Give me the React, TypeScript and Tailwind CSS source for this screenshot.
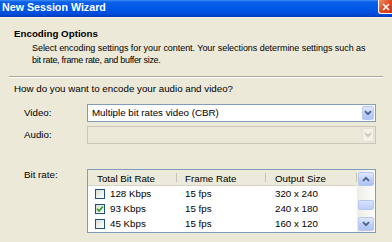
import React from "react";

function Chevron({ color }: { color: string }) {
  return (
    <svg width="8" height="6" viewBox="0 0 8 6">
      <path d="M1 1.2 L4 4.2 L7 1.2" fill="none" stroke={color} strokeWidth="1.8" />
    </svg>
  );
}

function ChevronUp({ color }: { color: string }) {
  return (
    <svg width="8" height="6" viewBox="0 0 8 6">
      <path d="M1 4.8 L4 1.8 L7 4.8" fill="none" stroke={color} strokeWidth="1.8" />
    </svg>
  );
}

function CheckBox({ checked }: { checked?: boolean }) {
  return (
    <div className="w-[10px] h-[10px] border border-[#1c5180] bg-[linear-gradient(135deg,#dcdcd5,#ffffff)] flex items-center justify-center">
      {checked && (
        <svg width="8" height="8" viewBox="0 0 8 8">
          <path d="M1 3.8 L3 6 L7 1.5" fill="none" stroke="#21a121" strokeWidth="1.6" />
        </svg>
      )}
    </div>
  );
}

const rows = [
  { rate: "128 Kbps", fps: "15 fps", size: "320 x 240", checked: false },
  { rate: "93 Kbps", fps: "15 fps", size: "240 x 180", checked: true },
  { rate: "45 Kbps", fps: "15 fps", size: "160 x 120", checked: false },
];

export default function App() {
  return (
    <div
      className="w-[392px] h-[242px] overflow-hidden bg-[#ece9d8] text-black text-[9.75px] leading-[12px]"
      style={{ fontFamily: '"Liberation Sans", Arial, sans-serif' }}
    >
      {/* Title bar */}
      <div className="h-[17px] flex justify-between items-start bg-[linear-gradient(to_bottom,#3d8ef7_0%,#0a5fe8_12%,#0056e6_55%,#004ad8_85%,#0039ad_100%)]">
        <div className="pl-[2px] text-white font-bold text-[10.7px] leading-[14px] whitespace-nowrap">New Session Wizard</div>
        <div className="w-[14px] h-[14px] rounded-bl-[3px] border-l border-b border-white bg-[linear-gradient(135deg,#f0906a,#e04a22_50%,#c9361a)] flex items-center justify-center">
          <svg width="8" height="8" viewBox="0 0 8 8">
            <path d="M1 1 L7 7 M7 1 L1 7" stroke="white" strokeWidth="1.6" />
          </svg>
        </div>
      </div>
      <div className="h-px bg-[#f4f2e8]" />

      {/* Header */}
      <div className="pl-[14px] mt-[10px] font-bold whitespace-nowrap">Encoding Options</div>
      <div className="pl-[32px] mt-[3px] text-[9px] leading-[11.5px] whitespace-nowrap">
        <div className="tracking-[-0.05px]">Select encoding settings for your content. Your selections determine settings such as</div>
        <div className="tracking-[-0.3px]">bit rate, frame rate, and buffer size.</div>
      </div>

      {/* Separator */}
      <div className="mx-[9px] mt-[10px] h-px bg-[#aca899]" />
      <div className="mx-[9px] h-px bg-white" />

      <div className="pl-[14px] mt-[5px] whitespace-nowrap">How do you want to encode your audio and video?</div>

      {/* Video row */}
      <div className="flex items-center mt-[9px]">
        <div className="w-[87px] pl-[24px]">Video:</div>
        <div className="w-[289px] h-[18px] border border-[#7f9db9] bg-white p-[1px] flex items-center">
          <div className="flex-1 pl-[3px] whitespace-nowrap">Multiple bit rates video (CBR)</div>
          <div className="w-[12px] h-[14px] rounded-[2px] border border-[#b5c8f2] bg-[linear-gradient(to_bottom,#e0e9fd,#bccdf8_60%,#aec2f4)] flex items-center justify-center">
            <Chevron color="#4d6185" />
          </div>
        </div>
      </div>

      {/* Audio row */}
      <div className="flex items-center mt-[4px]">
        <div className="w-[87px] pl-[24px]">Audio:</div>
        <div className="w-[289px] h-[18px] border border-[#c9c7ba] bg-[#ebe8d8] p-[1px] flex items-center justify-end">
          <div className="w-[12px] h-[14px] rounded-[2px] border border-[#e3e1d6] bg-[#f3f1ea] flex items-center justify-center">
            <Chevron color="#c9c7ba" />
          </div>
        </div>
      </div>

      {/* Bit rate row */}
      <div className="flex items-start mt-[25px]">
        <div className="w-[87px] pl-[24px]">Bit rate:</div>
        <div className="w-[289px] h-[64px] border border-[#7f9db9] bg-white flex">
          <div className="flex-1 flex flex-col">
            <div className="h-[16px] flex bg-[#ebeadb] border-b border-[#d6d3c4] leading-[17px]">
              <div className="w-[89px] pl-[9px] flex justify-between">
                <span>Total Bit Rate</span>
                <span className="w-px my-[3px] bg-[#c7c5b2]" />
              </div>
              <div className="w-[89px] pl-[8px] flex justify-between">
                <span>Frame Rate</span>
                <span className="w-px my-[3px] bg-[#c7c5b2]" />
              </div>
              <div className="flex-1 pl-[9px] flex justify-between">
                <span>Output Size</span>
                <span className="w-px my-[3px] bg-[#c7c5b2]" />
              </div>
            </div>
            {rows.map((r) => (
              <div key={r.rate} className="h-[15px] flex items-center leading-[15px]">
                <div className="w-[89px] pl-[7px] flex items-center">
                  <CheckBox checked={r.checked} />
                  <span className="ml-[5px]">{r.rate}</span>
                </div>
                <div className="w-[89px] pl-[8px]">{r.fps}</div>
                <div className="flex-1 pl-[9px]">{r.size}</div>
              </div>
            ))}
          </div>
          {/* Scrollbar */}
          <div className="w-[18px] flex flex-col bg-[linear-gradient(to_right,#eeede5,#fcfcfa)] p-[1px]">
            <div className="mt-[1px] h-[14px] rounded-[2px] border border-[#b5c8f2] bg-[linear-gradient(to_bottom,#e0e9fd,#bccdf8_60%,#aec2f4)] flex items-center justify-center">
              <ChevronUp color="#4d6185" />
            </div>
            <div className="flex-1 flex flex-col justify-end pb-[7px]">
              <div className="h-[10px] rounded-[2px] border border-[#b5c8f2] bg-[linear-gradient(to_bottom,#d6e2fd,#bccdf8)]" />
            </div>
            <div className="h-[14px] rounded-[2px] border border-[#b5c8f2] bg-[linear-gradient(to_bottom,#e0e9fd,#bccdf8_60%,#aec2f4)] flex items-center justify-center">
              <Chevron color="#4d6185" />
            </div>
          </div>
        </div>
      </div>
    </div>
  );
}
